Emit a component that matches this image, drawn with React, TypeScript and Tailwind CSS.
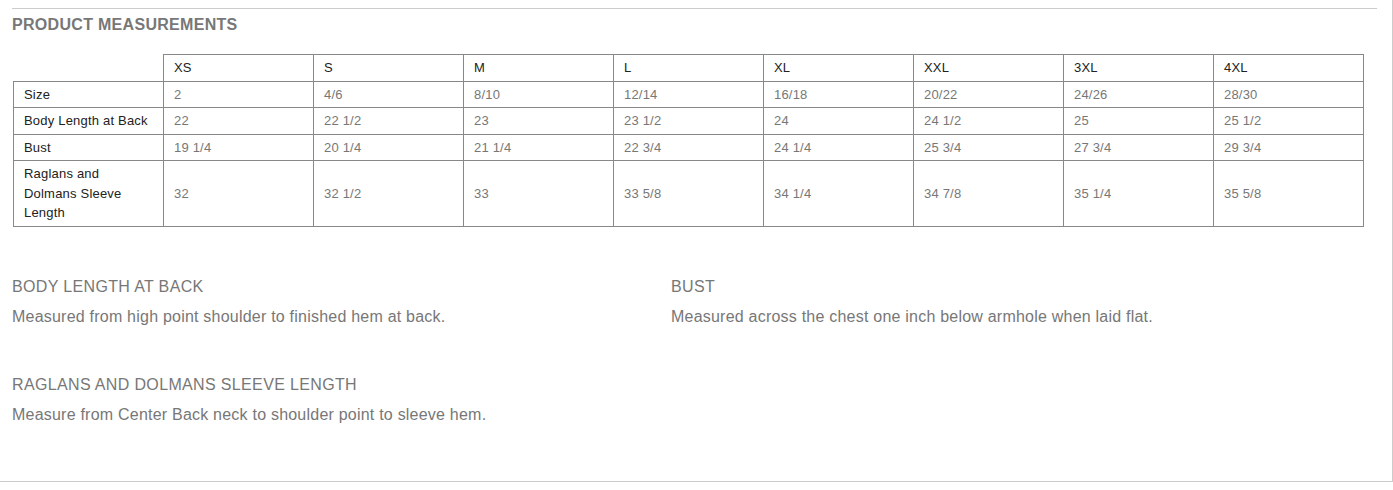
import React from "react";

const sizes = ["XS", "S", "M", "L", "XL", "XXL", "3XL", "4XL"];
const rows: { label: React.ReactNode; values: string[] }[] = [
  { label: "Size", values: ["2", "4/6", "8/10", "12/14", "16/18", "20/22", "24/26", "28/30"] },
  { label: "Body Length at Back", values: ["22", "22 1/2", "23", "23 1/2", "24", "24 1/2", "25", "25 1/2"] },
  { label: "Bust", values: ["19 1/4", "20 1/4", "21 1/4", "22 3/4", "24 1/4", "25 3/4", "27 3/4", "29 3/4"] },
  {
    label: (
      <>
        Raglans and
        <br />
        Dolmans Sleeve
        <br />
        Length
      </>
    ),
    values: ["32", "32 1/2", "33", "33 5/8", "34 1/4", "34 7/8", "35 1/4", "35 5/8"],
  },
];

const cell = "border border-[#888] px-[10px] py-[3px] text-left align-middle font-normal w-[150px]";

export default function App() {
  return (
    <div className="w-[1393px] h-[482px] border-r border-b border-[#ccc] bg-white font-['Liberation_Sans',Arial,sans-serif]">
      <div className="pl-3 pr-[15px] pt-2">
        <div className="border-t border-[#ccc]" />
        <h2 className="mt-[6px] text-[16px] leading-[20px] font-bold tracking-[0.3px] text-[#777]">PRODUCT MEASUREMENTS</h2>
        <table className="mt-[19px] ml-px border-collapse table-fixed w-[1350px] text-[13px] leading-[1.5] tracking-[0.2px]">
          <thead>
            <tr>
              <th className="w-[150px] p-0 border-0"></th>
              {sizes.map((s) => (
                <th key={s} className={`${cell} text-[#222]`}>
                  {s}
                </th>
              ))}
            </tr>
          </thead>
          <tbody>
            {rows.map((r, i) => (
              <tr key={i}>
                <td className={`${cell} text-[#222]`}>{r.label}</td>
                {r.values.map((v, j) => (
                  <td key={j} className={`${cell} text-[#777]`}>
                    {v}
                  </td>
                ))}
              </tr>
            ))}
          </tbody>
        </table>
        <div className="mt-[48px] grid grid-cols-[659px_1fr] gap-y-[44px] text-[16px] leading-[24px] text-[#777]">
          <div>
            <div className="tracking-[0.35px]">BODY LENGTH AT BACK</div>
            <div className="mt-[6px] tracking-[0.22px]">Measured from high point shoulder to finished hem at back.</div>
          </div>
          <div>
            <div className="tracking-[0.35px]">BUST</div>
            <div className="mt-[6px] tracking-[0.22px]">Measured across the chest one inch below armhole when laid flat.</div>
          </div>
          <div>
            <div className="tracking-[0.35px]">RAGLANS AND DOLMANS SLEEVE LENGTH</div>
            <div className="mt-[6px] tracking-[0.22px]">Measure from Center Back neck to shoulder point to sleeve hem.</div>
          </div>
        </div>
      </div>
    </div>
  );
}
